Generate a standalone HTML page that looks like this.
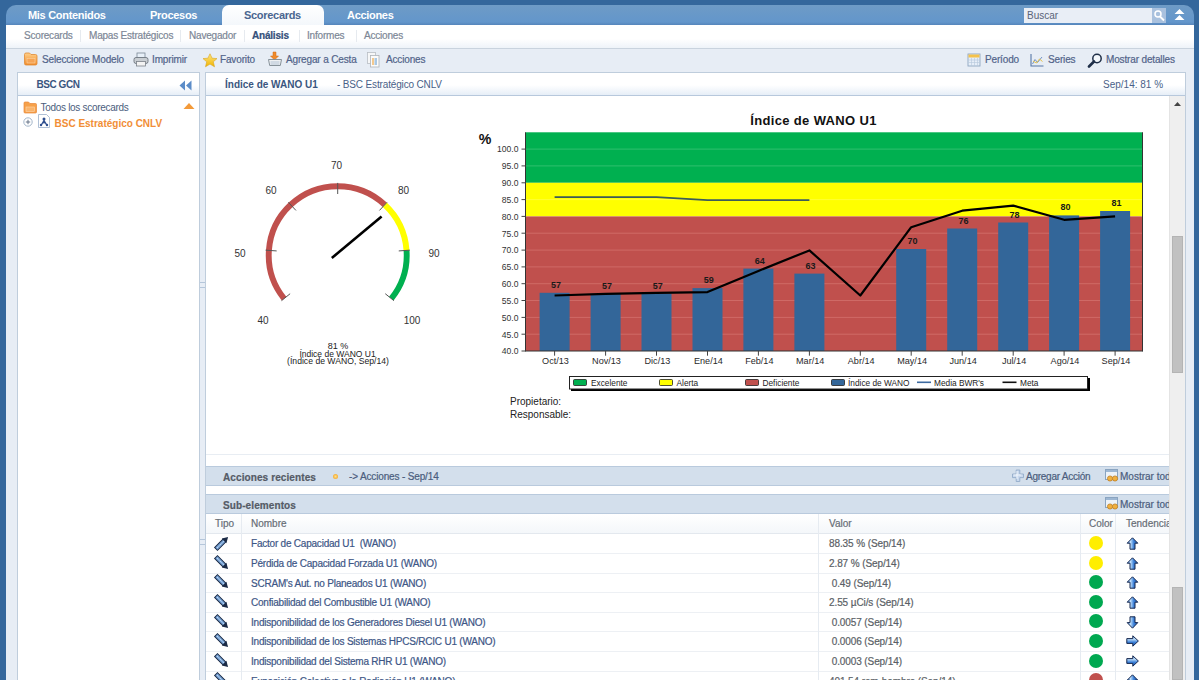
<!DOCTYPE html>
<html><head><meta charset="utf-8">
<style>
*{margin:0;padding:0;box-sizing:border-box}
html,body{width:1199px;height:680px;overflow:hidden;background:#34679c;font-family:"Liberation Sans",sans-serif}
.a{position:absolute;white-space:nowrap}
#tabbar{position:absolute;left:6px;top:5px;width:1188px;height:20px;background:linear-gradient(#6e9bc6,#6396cb 85%,#5585bb);border-radius:10px 10px 0 0}
.tab{position:absolute;top:9px;font-size:11px;font-weight:bold;color:#fff;letter-spacing:-0.3px}
.tb,.sn,.a div{-webkit-text-stroke:0.2px currentColor}
#acttab{position:absolute;left:222px;top:5px;width:102px;height:21px;background:linear-gradient(#fff,#f3f7fb);border-radius:7px 7px 0 0}
#subnav{position:absolute;left:6px;top:25px;width:1188px;height:23px;background:linear-gradient(#fff 0,#fff 60%,#eef3f9 100%)}
.sn{position:absolute;top:30px;font-size:10px;color:#7d8796;letter-spacing:-0.2px}
.sep{position:absolute;top:30px;width:1px;height:12px;background:#e6eaef}
#toolbar{position:absolute;left:6px;top:48px;width:1188px;height:632px;background:#e7edf5;border-top:1px solid #c9d3de}
.tb{position:absolute;top:54px;font-size:10px;color:#52648a;letter-spacing:-0.15px}
.panel{position:absolute;background:#fff;border:1px solid #bfcddc}
.ph{position:absolute;background:linear-gradient(#fff 0,#fff 55%,#e6eef7 100%);border-bottom:1px solid #b7c8dc}
</style></head><body>
<div id="tabbar"></div>
<div id="acttab"></div>
<div class="tab" style="left:28px">Mis Contenidos</div>
<div class="tab" style="left:150px">Procesos</div>
<div class="tab" style="left:244px;color:#4a6690">Scorecards</div>
<div class="tab" style="left:347px">Acciones</div>
<!-- search -->
<div class="a" style="left:1024px;top:8px;width:128px;height:15px;background:#e9eef6"></div>
<div class="a" style="left:1027px;top:10px;font-size:10px;color:#5a6478">Buscar</div>
<div class="a" style="left:1152px;top:8px;width:14px;height:15px;background:#a9c1de"></div>
<svg class="a" style="left:1152px;top:8px" width="14" height="15" viewBox="0 0 14 15"><circle cx="6" cy="6" r="3" fill="none" stroke="#fff" stroke-width="1.5"/><line x1="8" y1="8.5" x2="12" y2="12.5" stroke="#fff" stroke-width="1.8"/></svg>
<svg class="a" style="left:1174px;top:8px" width="11" height="13" viewBox="0 0 11 13"><path d="M5.5 1 L10.5 6 L0.5 6 Z M5.5 7 L10.5 12 L0.5 12 Z" fill="#fff"/></svg>

<div id="subnav"></div>
<div class="sn" style="left:24px">Scorecards</div>
<div class="sep" style="left:80px"></div>
<div class="sn" style="left:89px">Mapas Estratégicos</div>
<div class="sep" style="left:180px"></div>
<div class="sn" style="left:189px">Navegador</div>
<div class="sep" style="left:244px"></div>
<div class="sn" style="left:252px;font-weight:bold;color:#34507a">Análisis</div>
<div class="sep" style="left:299px"></div>
<div class="sn" style="left:307px">Informes</div>
<div class="sep" style="left:356px"></div>
<div class="sn" style="left:364px">Acciones</div>

<div id="toolbar"></div>
<div class="a" style="left:0;top:48px;width:6px;height:632px;background:#34679c"></div>
<div class="a" style="left:1194px;top:48px;width:5px;height:632px;background:#34679c"></div>

<!-- toolbar items -->
<div class="tb" style="left:42px">Seleccione Modelo</div>
<div class="tb" style="left:152px">Imprimir</div>
<div class="tb" style="left:220px">Favorito</div>
<div class="tb" style="left:286px">Agregar a Cesta</div>
<div class="tb" style="left:386px">Acciones</div>
<div class="tb" style="left:985px">Período</div>
<div class="tb" style="left:1048px">Series</div>
<div class="tb" style="left:1106px">Mostrar detalles</div>

<!-- left panel -->
<div class="panel" style="left:17px;top:72px;width:183px;height:620px"></div>
<div class="ph" style="left:18px;top:73px;width:181px;height:23px"></div>
<div class="a" style="left:36.5px;top:78.5px;font-size:10px;font-weight:bold;color:#3a5680;letter-spacing:-0.45px">BSC GCN</div>

<!-- main panel -->
<div class="panel" style="left:205px;top:72px;width:981px;height:620px"></div>
<div class="ph" style="left:206px;top:73px;width:979px;height:23px"></div>
<div class="a" style="left:225px;top:79px;font-size:10px;font-weight:bold;color:#3a5680">Índice de WANO U1</div>
<div class="a" style="left:337px;top:79px;font-size:10px;color:#4a5f88;letter-spacing:-0.15px">- BSC Estratégico CNLV</div>
<div class="a" style="left:1103px;top:79px;font-size:10px;color:#4a5f88">Sep/14: 81 %</div>


<!-- toolbar icons -->
<svg class="a" style="left:23px;top:52px" width="16" height="14" viewBox="0 0 16 14"><defs><linearGradient id="fo" x1="0" y1="0" x2="0" y2="1"><stop offset="0" stop-color="#ffd08a"/><stop offset="1" stop-color="#f08a2a"/></linearGradient></defs><path d="M1.5 2.5 Q1.5 1 3 1 L6.5 1 L8 2.5 L12.5 2.5 Q14 2.5 14 4 L14 11.5 Q14 13 12.5 13 L3 13 Q1.5 13 1.5 11.5 Z" fill="url(#fo)" stroke="#e08a35" stroke-width="0.8"/><rect x="4" y="6.5" width="8" height="4.5" fill="#f6a455" stroke="#fbd3a3" stroke-width="0.6"/></svg>
<svg class="a" style="left:133px;top:52px" width="16" height="15" viewBox="0 0 16 15"><rect x="4" y="1" width="8" height="5" fill="#e8f0f8" stroke="#7a8896" stroke-width="0.8"/><rect x="1" y="5.5" width="14" height="6" rx="2" fill="#c9ced3" stroke="#6f7780" stroke-width="0.9"/><rect x="3.5" y="9.5" width="9" height="4.5" fill="#f3f3f3" stroke="#7a8088" stroke-width="0.8"/></svg>
<svg class="a" style="left:201.5px;top:53px" width="16" height="15" viewBox="0 0 16 15"><defs><linearGradient id="st" x1="0" y1="0" x2="0" y2="1"><stop offset="0" stop-color="#ffe680"/><stop offset="1" stop-color="#f0b400"/></linearGradient></defs><path d="M8 0.8 L10.1 5.2 L15 5.6 L11.3 8.8 L12.5 13.8 L8 11.1 L3.5 13.8 L4.7 8.8 L1 5.6 L5.9 5.2 Z" fill="url(#st)" stroke="#d9a520" stroke-width="0.6"/></svg>
<svg class="a" style="left:267px;top:51px" width="16" height="16" viewBox="0 0 16 16"><path d="M6 1h3v4h2.5L7.5 9 3.5 5H6z" fill="#f08a2a" stroke="#d06a10" stroke-width="0.5"/><path d="M1.5 8.5h13l-1.2 6h-10.6z" fill="#eef0f2" stroke="#7c8790" stroke-width="0.9"/><path d="M3.5 11h9M3.5 13h9" stroke="#9ab0c8" stroke-width="0.7"/></svg>
<svg class="a" style="left:367px;top:52px" width="14" height="16" viewBox="0 0 14 16"><rect x="0.5" y="0.5" width="8" height="11" fill="#f6f7f8" stroke="#b9bec4" stroke-width="0.8"/><rect x="3.5" y="3.5" width="8.5" height="11.5" fill="#fbfbfb" stroke="#aeb4ba" stroke-width="0.8"/><rect x="5" y="6" width="2" height="7" fill="#f4c98e"/><rect x="7.5" y="6" width="2.5" height="7" fill="#a9c8e4"/></svg>
<svg class="a" style="left:967px;top:53px" width="15" height="14" viewBox="0 0 15 14"><rect x="1" y="1" width="12" height="12" fill="#e6eef8" stroke="#8ea6c2" stroke-width="0.9"/><rect x="1.5" y="1.5" width="11" height="3" fill="#f5c24a"/><path d="M1.5 7h11M1.5 9.5h11M4.5 5v8M7.5 5v8M10.5 5v8" stroke="#b6c8dc" stroke-width="0.6"/></svg>
<svg class="a" style="left:1030px;top:53px" width="15" height="14" viewBox="0 0 15 14"><path d="M1 1v12h12.5" fill="none" stroke="#5777a6" stroke-width="1.1"/><path d="M2.5 11 L5 6.5 L7.5 9.5 L12 4" fill="none" stroke="#7394c6" stroke-width="1"/><path d="M3 8 L6.5 10 L9.5 6 L12.5 8.5" fill="none" stroke="#e6c24a" stroke-width="1"/></svg>
<svg class="a" style="left:1087px;top:53px" width="16" height="15" viewBox="0 0 16 15"><circle cx="10" cy="5.5" r="4.2" fill="#f4f8fc" stroke="#1f2f48" stroke-width="1.5"/><path d="M7 8.5 L2 13.5" stroke="#1f2f48" stroke-width="2.6" stroke-linecap="round"/></svg>

<!-- left panel tree -->
<svg class="a" style="left:179px;top:79.5px" width="13" height="11" viewBox="0 0 13 11"><path d="M6 0.5 L0.5 5.5 L6 10.5 Z M12.5 0.5 L7 5.5 L12.5 10.5 Z" fill="#5b8cc8"/></svg>
<svg class="a" style="left:23px;top:101px" width="15" height="13" viewBox="0 0 15 13"><path d="M1 2 Q1 1 2 1 L5.5 1 L7 2.5 L12.5 2.5 Q13.5 2.5 13.5 3.5 L13.5 11 Q13.5 12 12.5 12 L2 12 Q1 12 1 11 Z" fill="#f6a14a" stroke="#e8873a" stroke-width="0.7"/><rect x="3" y="6" width="8.5" height="4.5" fill="#f9b46c" stroke="#fdd6ac" stroke-width="0.6"/></svg>
<div class="a" style="left:40.5px;top:101.5px;font-size:10px;color:#4b5d7d;letter-spacing:-0.3px">Todos los scorecards</div>
<svg class="a" style="left:183px;top:102px" width="12" height="8" viewBox="0 0 12 8"><path d="M6 1 L11.5 7 L0.5 7 Z" fill="#f39a3a"/></svg>
<svg class="a" style="left:23px;top:117px" width="10" height="10" viewBox="0 0 10 10"><circle cx="5" cy="5" r="4.2" fill="#fff" stroke="#8da3bd" stroke-width="0.8"/><path d="M2.8 5h4.4M5 2.8v4.4" stroke="#5a6a80" stroke-width="0.9"/></svg>
<svg class="a" style="left:38px;top:114px" width="12" height="14" viewBox="0 0 12 14"><path d="M0.5 0.5h8l3 3v10h-11z" fill="#fff" stroke="#9ab0cc" stroke-width="0.8"/><circle cx="6" cy="5" r="1.5" fill="#2f4f8f"/><path d="M3 11.5 L6 6.5 L9 11.5 M6 6.5v3" stroke="#2f4f8f" stroke-width="1.4" fill="none"/><circle cx="3" cy="11" r="1.2" fill="#2f4f8f"/><circle cx="9" cy="11" r="1.2" fill="#2f4f8f"/></svg>
<div class="a" style="left:54.5px;top:118px;font-size:10px;font-weight:bold;color:#f18e36">BSC Estratégico CNLV</div>
<!-- splitter grip -->
<div class="a" style="left:200px;top:539px;width:5px;height:6px;border-top:1px solid #b5c6da;border-bottom:1px solid #b5c6da"></div>
<div class="a" style="left:200px;top:282px;width:5px;height:6px;border-top:1px solid #b5c6da;border-bottom:1px solid #b5c6da"></div>
<svg class="a" style="left:0;top:0" width="1199" height="680" viewBox="0 0 1199 680" font-family="Liberation Sans">
<path d="M284.08 298.62 A69.0 69.0 0 0 1 384.76 204.74" fill="none" stroke="#c0504d" stroke-width="5.9"/>
<path d="M384.76 204.74 A69.0 69.0 0 0 1 406.53 250.39" fill="none" stroke="#ffff00" stroke-width="5.9"/>
<path d="M406.53 250.39 A69.0 69.0 0 0 1 391.32 298.62" fill="none" stroke="#00b050" stroke-width="5.9"/>
<line x1="290.14" y1="293.71" x2="281.51" y2="300.70" stroke="#555" stroke-width="1"/>
<line x1="276.65" y1="250.93" x2="265.58" y2="250.16" stroke="#555" stroke-width="1"/>
<line x1="295.96" y1="210.44" x2="288.39" y2="202.32" stroke="#555" stroke-width="1"/>
<line x1="337.70" y1="194.00" x2="337.70" y2="182.90" stroke="#555" stroke-width="1"/>
<line x1="379.44" y1="210.44" x2="387.01" y2="202.32" stroke="#555" stroke-width="1"/>
<line x1="398.75" y1="250.93" x2="409.82" y2="250.16" stroke="#555" stroke-width="1"/>
<line x1="385.26" y1="293.71" x2="393.89" y2="300.70" stroke="#555" stroke-width="1"/>
<line x1="331.8" y1="258" x2="381.6" y2="216.6" stroke="#000" stroke-width="2.6" stroke-linecap="butt"/>
<text x="336.5" y="168.6" font-size="10" fill="#333" text-anchor="middle">70</text>
<text x="271" y="194.4" font-size="10" fill="#333" text-anchor="middle">60</text>
<text x="403.5" y="194.4" font-size="10" fill="#333" text-anchor="middle">80</text>
<text x="240" y="256.6" font-size="10" fill="#333" text-anchor="middle">50</text>
<text x="434" y="256.6" font-size="10" fill="#333" text-anchor="middle">90</text>
<text x="263" y="324.2" font-size="10" fill="#333" text-anchor="middle">40</text>
<text x="412" y="324.2" font-size="10" fill="#333" text-anchor="middle">100</text>
<text x="338" y="349" font-size="9" fill="#222" text-anchor="middle">81 %</text>
<text x="337.5" y="356.5" font-size="8.5" fill="#222" text-anchor="middle">Índice de WANO U1</text>
<text x="338" y="364" font-size="8.65" fill="#222" text-anchor="middle">(Índice de WANO, Sep/14)</text>
<text x="510" y="405" font-size="10" fill="#222">Propietario:</text>
<text x="510" y="417.5" font-size="10" fill="#222">Responsable:</text>
</svg>
<svg class="a" style="left:0;top:0" width="1199" height="680" viewBox="0 0 1199 680" font-family="Liberation Sans">
<rect x="525.5" y="132.3" width="617.0" height="50.5" fill="#00b050"/>
<rect x="525.5" y="182.8" width="617.0" height="33.6" fill="#ffff00"/>
<rect x="525.5" y="216.4" width="617.0" height="134.6" fill="#c0504d"/>
<line x1="525.5" y1="334.2" x2="1142.5" y2="334.2" stroke="#cf6a66" stroke-width="1"/>
<line x1="525.5" y1="317.4" x2="1142.5" y2="317.4" stroke="#cf6a66" stroke-width="1"/>
<line x1="525.5" y1="300.5" x2="1142.5" y2="300.5" stroke="#cf6a66" stroke-width="1"/>
<line x1="525.5" y1="283.7" x2="1142.5" y2="283.7" stroke="#cf6a66" stroke-width="1"/>
<line x1="525.5" y1="266.9" x2="1142.5" y2="266.9" stroke="#cf6a66" stroke-width="1"/>
<line x1="525.5" y1="250.1" x2="1142.5" y2="250.1" stroke="#cf6a66" stroke-width="1"/>
<line x1="525.5" y1="233.2" x2="1142.5" y2="233.2" stroke="#cf6a66" stroke-width="1"/>
<line x1="525.5" y1="199.6" x2="1142.5" y2="199.6" stroke="#ffff33" stroke-width="1"/>
<line x1="525.5" y1="165.9" x2="1142.5" y2="165.9" stroke="#2fbf6f" stroke-width="1"/>
<line x1="525.5" y1="149.1" x2="1142.5" y2="149.1" stroke="#2fbf6f" stroke-width="1"/>
<rect x="539.6" y="292.8" width="30" height="58.2" fill="#336699"/>
<rect x="590.6" y="293.8" width="30" height="57.2" fill="#336699"/>
<rect x="641.5" y="293.5" width="30" height="57.5" fill="#336699"/>
<rect x="692.5" y="288.1" width="30" height="62.9" fill="#336699"/>
<rect x="743.4" y="268.6" width="30" height="82.4" fill="#336699"/>
<rect x="794.4" y="273.6" width="30" height="77.4" fill="#336699"/>
<rect x="896.2" y="249.0" width="30" height="102.0" fill="#336699"/>
<rect x="947.2" y="228.5" width="30" height="122.5" fill="#336699"/>
<rect x="998.2" y="222.5" width="30" height="128.5" fill="#336699"/>
<rect x="1049.1" y="215.4" width="30" height="135.6" fill="#336699"/>
<rect x="1100.1" y="211.0" width="30" height="140.0" fill="#336699"/>
<polyline points="554.6,197.2 605.6,197.2 656.5,197.2 707.5,200.2 758.4,200.2 809.4,200.2" fill="none" stroke="#3d5c58" stroke-width="1.7"/>
<polyline points="554.6,295.5 605.6,293.8 656.5,292.8 707.5,292.1 758.4,270.9 809.4,250.4 860.3,295.5 911.2,227.2 962.2,210.7 1013.2,205.6 1064.1,219.8 1115.1,216.4" fill="none" stroke="#000" stroke-width="2.2" stroke-linejoin="round"/>
<text x="555.9" y="287.8" font-size="9" font-weight="bold" fill="#1a1a1a" text-anchor="middle">57</text>
<text x="606.9" y="288.8" font-size="9" font-weight="bold" fill="#1a1a1a" text-anchor="middle">57</text>
<text x="657.8" y="288.5" font-size="9" font-weight="bold" fill="#1a1a1a" text-anchor="middle">57</text>
<text x="708.8" y="283.1" font-size="9" font-weight="bold" fill="#1a1a1a" text-anchor="middle">59</text>
<text x="759.7" y="263.6" font-size="9" font-weight="bold" fill="#1a1a1a" text-anchor="middle">64</text>
<text x="810.6" y="268.6" font-size="9" font-weight="bold" fill="#1a1a1a" text-anchor="middle">63</text>
<text x="912.5" y="244.0" font-size="9" font-weight="bold" fill="#1a1a1a" text-anchor="middle">70</text>
<text x="963.5" y="223.5" font-size="9" font-weight="bold" fill="#1a1a1a" text-anchor="middle">76</text>
<text x="1014.5" y="217.5" font-size="9" font-weight="bold" fill="#1a1a1a" text-anchor="middle">78</text>
<text x="1065.4" y="210.4" font-size="9" font-weight="bold" fill="#1a1a1a" text-anchor="middle">80</text>
<text x="1116.4" y="206.0" font-size="9" font-weight="bold" fill="#1a1a1a" text-anchor="middle">81</text>
<line x1="525.5" y1="132.3" x2="525.5" y2="351.5" stroke="#333" stroke-width="1"/>
<line x1="1142.5" y1="132.3" x2="1142.5" y2="351.5" stroke="#333" stroke-width="1"/>
<line x1="525.5" y1="351.0" x2="1142.5" y2="351.0" stroke="#333" stroke-width="1"/>
<line x1="521.5" y1="351.0" x2="525.5" y2="351.0" stroke="#444" stroke-width="1"/>
<text x="518.5" y="354.3" font-size="8.6" fill="#333" text-anchor="end">40.0</text>
<line x1="521.5" y1="334.2" x2="525.5" y2="334.2" stroke="#444" stroke-width="1"/>
<text x="518.5" y="337.5" font-size="8.6" fill="#333" text-anchor="end">45.0</text>
<line x1="521.5" y1="317.4" x2="525.5" y2="317.4" stroke="#444" stroke-width="1"/>
<text x="518.5" y="320.7" font-size="8.6" fill="#333" text-anchor="end">50.0</text>
<line x1="521.5" y1="300.5" x2="525.5" y2="300.5" stroke="#444" stroke-width="1"/>
<text x="518.5" y="303.8" font-size="8.6" fill="#333" text-anchor="end">55.0</text>
<line x1="521.5" y1="283.7" x2="525.5" y2="283.7" stroke="#444" stroke-width="1"/>
<text x="518.5" y="287.0" font-size="8.6" fill="#333" text-anchor="end">60.0</text>
<line x1="521.5" y1="266.9" x2="525.5" y2="266.9" stroke="#444" stroke-width="1"/>
<text x="518.5" y="270.2" font-size="8.6" fill="#333" text-anchor="end">65.0</text>
<line x1="521.5" y1="250.1" x2="525.5" y2="250.1" stroke="#444" stroke-width="1"/>
<text x="518.5" y="253.4" font-size="8.6" fill="#333" text-anchor="end">70.0</text>
<line x1="521.5" y1="233.2" x2="525.5" y2="233.2" stroke="#444" stroke-width="1"/>
<text x="518.5" y="236.5" font-size="8.6" fill="#333" text-anchor="end">75.0</text>
<line x1="521.5" y1="216.4" x2="525.5" y2="216.4" stroke="#444" stroke-width="1"/>
<text x="518.5" y="219.7" font-size="8.6" fill="#333" text-anchor="end">80.0</text>
<line x1="521.5" y1="199.6" x2="525.5" y2="199.6" stroke="#444" stroke-width="1"/>
<text x="518.5" y="202.9" font-size="8.6" fill="#333" text-anchor="end">85.0</text>
<line x1="521.5" y1="182.8" x2="525.5" y2="182.8" stroke="#444" stroke-width="1"/>
<text x="518.5" y="186.1" font-size="8.6" fill="#333" text-anchor="end">90.0</text>
<line x1="521.5" y1="165.9" x2="525.5" y2="165.9" stroke="#444" stroke-width="1"/>
<text x="518.5" y="169.2" font-size="8.6" fill="#333" text-anchor="end">95.0</text>
<line x1="521.5" y1="149.1" x2="525.5" y2="149.1" stroke="#444" stroke-width="1"/>
<text x="518.5" y="152.4" font-size="8.6" fill="#333" text-anchor="end">100.0</text>
<line x1="554.6" y1="351.0" x2="554.6" y2="355.7" stroke="#444" stroke-width="1"/>
<text x="555.5" y="364.4" font-size="9.1" fill="#2a2a2a" text-anchor="middle">Oct/13</text>
<line x1="605.6" y1="351.0" x2="605.6" y2="355.7" stroke="#444" stroke-width="1"/>
<text x="606.5" y="364.4" font-size="9.1" fill="#2a2a2a" text-anchor="middle">Nov/13</text>
<line x1="656.5" y1="351.0" x2="656.5" y2="355.7" stroke="#444" stroke-width="1"/>
<text x="657.4" y="364.4" font-size="9.1" fill="#2a2a2a" text-anchor="middle">Dic/13</text>
<line x1="707.5" y1="351.0" x2="707.5" y2="355.7" stroke="#444" stroke-width="1"/>
<text x="708.4" y="364.4" font-size="9.1" fill="#2a2a2a" text-anchor="middle">Ene/14</text>
<line x1="758.4" y1="351.0" x2="758.4" y2="355.7" stroke="#444" stroke-width="1"/>
<text x="759.3" y="364.4" font-size="9.1" fill="#2a2a2a" text-anchor="middle">Feb/14</text>
<line x1="809.4" y1="351.0" x2="809.4" y2="355.7" stroke="#444" stroke-width="1"/>
<text x="810.2" y="364.4" font-size="9.1" fill="#2a2a2a" text-anchor="middle">Mar/14</text>
<line x1="860.3" y1="351.0" x2="860.3" y2="355.7" stroke="#444" stroke-width="1"/>
<text x="861.2" y="364.4" font-size="9.1" fill="#2a2a2a" text-anchor="middle">Abr/14</text>
<line x1="911.2" y1="351.0" x2="911.2" y2="355.7" stroke="#444" stroke-width="1"/>
<text x="912.1" y="364.4" font-size="9.1" fill="#2a2a2a" text-anchor="middle">May/14</text>
<line x1="962.2" y1="351.0" x2="962.2" y2="355.7" stroke="#444" stroke-width="1"/>
<text x="963.1" y="364.4" font-size="9.1" fill="#2a2a2a" text-anchor="middle">Jun/14</text>
<line x1="1013.2" y1="351.0" x2="1013.2" y2="355.7" stroke="#444" stroke-width="1"/>
<text x="1014.1" y="364.4" font-size="9.1" fill="#2a2a2a" text-anchor="middle">Jul/14</text>
<line x1="1064.1" y1="351.0" x2="1064.1" y2="355.7" stroke="#444" stroke-width="1"/>
<text x="1065.0" y="364.4" font-size="9.1" fill="#2a2a2a" text-anchor="middle">Ago/14</text>
<line x1="1115.1" y1="351.0" x2="1115.1" y2="355.7" stroke="#444" stroke-width="1"/>
<text x="1116.0" y="364.4" font-size="9.1" fill="#2a2a2a" text-anchor="middle">Sep/14</text>
<text x="478.8" y="144.2" font-size="14.2" font-weight="bold" fill="#111">%</text>
<text x="813.5" y="125" font-size="13" font-weight="bold" fill="#111" text-anchor="middle" letter-spacing="0.35">Índice de WANO U1</text>
<rect x="571" y="378" width="519" height="13" fill="#000"/>
<rect x="569.5" y="376.5" width="518" height="12.5" fill="#fff" stroke="#222" stroke-width="1"/>
<rect x="573.5" y="379.5" width="13" height="6" fill="#00b050" stroke="#222" stroke-width="0.8" rx="1"/>
<text x="591" y="386" font-size="8.3" fill="#222">Excelente</text>
<rect x="659.5" y="379.5" width="13" height="6" fill="#ffff00" stroke="#222" stroke-width="0.8" rx="1"/>
<text x="676.5" y="386" font-size="8.3" fill="#222">Alerta</text>
<rect x="745.5" y="379.5" width="13" height="6" fill="#c0504d" stroke="#222" stroke-width="0.8" rx="1"/>
<text x="762.5" y="386" font-size="8.3" fill="#222">Deficiente</text>
<rect x="831.5" y="379.5" width="13" height="6" fill="#336699" stroke="#222" stroke-width="0.8" rx="1"/>
<text x="848" y="386" font-size="8.3" fill="#222">Índice de WANO</text>
<line x1="917" y1="382.3" x2="931" y2="382.3" stroke="#3d6aa0" stroke-width="1.6"/>
<text x="934" y="386" font-size="8.3" fill="#222">Media BWR's</text>
<line x1="1002.5" y1="382.3" x2="1016.5" y2="382.3" stroke="#111" stroke-width="1.6"/>
<text x="1020" y="386" font-size="8.3" fill="#222">Meta</text>
</svg>
<div class="a" style="left:206px;top:454px;width:963px;height:1px;background:#e8edf3"></div>
<div class="a" style="left:1169px;top:96px;width:16px;height:584px;background:#efefef;border-left:1px solid #e4e4e4"></div>
<svg class="a" style="left:1172px;top:99px" width="11" height="9"><path d="M2 7 L5.5 3 L9 7 Z" fill="#444"/></svg>
<div class="a" style="left:1172px;top:236px;width:11px;height:137px;background:#c1c1c1;border:1px solid #b4b4b4"></div>
<div class="a" style="left:1172px;top:587px;width:11px;height:93px;background:#c1c1c1;border:1px solid #b4b4b4"></div>
<div class="a" style="left:0;top:0;width:1169px;height:680px;overflow:hidden">
<div class="a" style="left:206px;top:466px;width:963px;height:20px;background:#d3dfec;border-top:1px solid #b9cadd;border-bottom:1px solid #b9cadd"></div>
<div class="a" style="left:223px;top:471.6px;font-size:10px;font-weight:bold;color:#555b66;letter-spacing:0.1px">Acciones recientes</div>
<div class="a" style="left:206px;top:494px;width:963px;height:20px;background:#d3dfec;border-top:1px solid #b9cadd;border-bottom:1px solid #b9cadd"></div>
<div class="a" style="left:223px;top:499.6px;font-size:10px;font-weight:bold;color:#555b66;letter-spacing:0.1px">Sub-elementos</div>
<div class="a" style="left:333px;top:473.5px;width:5px;height:5px;border-radius:50%;background:radial-gradient(#ffe08a 0,#f5b440 60%,#f2a030 100%)"></div>
<div class="a" style="left:349px;top:471px;font-size:10px;color:#4b5d7d;letter-spacing:-0.15px">-&gt; Acciones - Sep/14</div>
<svg class="a" style="left:1012px;top:469px" width="12" height="13"><path d="M4.2 1h3.6v4h3.7v3.6H7.8v3.9H4.2V8.6H0.5V5h3.7z" fill="#c9d9ee" stroke="#93abc9" stroke-width="0.9"/><path d="M5 2v8M1.5 6h8" stroke="#f4f8fd" stroke-width="0.9"/></svg>
<div class="a" style="left:1026px;top:471px;font-size:10px;color:#4b5d7d;letter-spacing:-0.25px">Agregar Acción</div>
<svg class="a" style="left:1105px;top:469px" width="15" height="13"><rect x="0.5" y="0.5" width="12" height="10" fill="#eef3f8" stroke="#8aa4c0"/><rect x="1" y="1" width="11" height="2" fill="#9db7d3"/><circle cx="5" cy="9.5" r="2.6" fill="#f0b040" stroke="#b87a20" stroke-width="0.7"/><circle cx="10" cy="9.5" r="2.6" fill="#f0b040" stroke="#b87a20" stroke-width="0.7"/></svg>
<div class="a" style="left:1120px;top:471px;width:49px;overflow:hidden;font-size:10px;color:#4b5d7d">Mostrar todo</div>
<svg class="a" style="left:1105px;top:497px" width="15" height="13"><rect x="0.5" y="0.5" width="12" height="10" fill="#eef3f8" stroke="#8aa4c0"/><rect x="1" y="1" width="11" height="2" fill="#9db7d3"/><circle cx="5" cy="9.5" r="2.6" fill="#f0b040" stroke="#b87a20" stroke-width="0.7"/><circle cx="10" cy="9.5" r="2.6" fill="#f0b040" stroke="#b87a20" stroke-width="0.7"/></svg>
<div class="a" style="left:1120px;top:499px;width:49px;overflow:hidden;font-size:10px;color:#4b5d7d">Mostrar todo</div>
<div class="a" style="left:206px;top:514px;width:963px;height:20px;background:linear-gradient(#fff,#f4f7fa);border-bottom:1px solid #e3e8ee"></div>
<div class="a" style="left:215px;top:518px;font-size:10px;color:#676d76">Tipo</div>
<div class="a" style="left:251px;top:518px;font-size:10px;color:#676d76">Nombre</div>
<div class="a" style="left:829px;top:518px;font-size:10px;color:#676d76">Valor</div>
<div class="a" style="left:1089px;top:518px;font-size:10px;color:#676d76">Color</div>
<div class="a" style="left:1126px;top:518px;font-size:10px;color:#676d76">Tendencia</div>
<div class="a" style="left:206px;top:552.9px;width:963px;height:1px;background:#edf0f4"></div>
<svg class="a" style="left:211.8px;top:532.8px" width="20" height="20" viewBox="0 0 20 20"><g transform="rotate(-45 10 10)"><rect x="1.6" y="8" width="12" height="4" fill="#77a3d6" stroke="#1b2a45" stroke-width="1"/><path d="M3 10h9.5" stroke="#cfe2f6" stroke-width="0.9" stroke-dasharray="1.2 0.9"/><path d="M13 6.8 L18.6 10 L13 13.2 Z" fill="#1b2a45"/></g></svg>
<div class="a" style="left:251px;top:538.4px;font-size:10px;color:#3d5686;letter-spacing:-0.22px">Factor de Capacidad U1&nbsp; (WANO)</div>
<div class="a" style="left:829px;top:538.4px;font-size:10px;color:#5b5f66;letter-spacing:-0.1px">88.35 % (Sep/14)</div>
<div class="a" style="left:1089px;top:536.0px;width:14px;height:14px;border-radius:50%;background:#ffee00"></div>
<svg class="a" style="left:1126px;top:537.2px" width="14" height="14" viewBox="0 0 14 14"><defs><linearGradient id="g0" x1="0" y1="0" x2="1" y2="0"><stop offset="0" stop-color="#3f86dc"/><stop offset="0.3" stop-color="#c6e3fc"/><stop offset="0.62" stop-color="#3b80d8"/><stop offset="1" stop-color="#1c56b0"/></linearGradient></defs><path d="M6.5 0.8 L11.8 6.2 L9 6.2 L9 12.2 L4 12.2 L4 6.2 L1.2 6.2 Z" fill="url(#g0)" stroke="#17284f" stroke-width="1" stroke-linejoin="miter"/></svg>
<div class="a" style="left:206px;top:572.5px;width:963px;height:1px;background:#edf0f4"></div>
<svg class="a" style="left:211.8px;top:552.8px" width="20" height="20" viewBox="0 0 20 20"><g transform="rotate(45 10 10)"><rect x="1.6" y="8" width="12" height="4" fill="#77a3d6" stroke="#1b2a45" stroke-width="1"/><path d="M3 10h9.5" stroke="#cfe2f6" stroke-width="0.9" stroke-dasharray="1.2 0.9"/><path d="M13 6.8 L18.6 10 L13 13.2 Z" fill="#1b2a45"/></g></svg>
<div class="a" style="left:251px;top:558.0px;font-size:10px;color:#3d5686;letter-spacing:-0.22px">Pérdida de Capacidad Forzada U1 (WANO)</div>
<div class="a" style="left:829px;top:558.0px;font-size:10px;color:#5b5f66;letter-spacing:-0.1px">2.87 % (Sep/14)</div>
<div class="a" style="left:1089px;top:555.6px;width:14px;height:14px;border-radius:50%;background:#ffee00"></div>
<svg class="a" style="left:1126px;top:556.8px" width="14" height="14" viewBox="0 0 14 14"><defs><linearGradient id="g1" x1="0" y1="0" x2="1" y2="0"><stop offset="0" stop-color="#3f86dc"/><stop offset="0.3" stop-color="#c6e3fc"/><stop offset="0.62" stop-color="#3b80d8"/><stop offset="1" stop-color="#1c56b0"/></linearGradient></defs><path d="M6.5 0.8 L11.8 6.2 L9 6.2 L9 12.2 L4 12.2 L4 6.2 L1.2 6.2 Z" fill="url(#g1)" stroke="#17284f" stroke-width="1" stroke-linejoin="miter"/></svg>
<div class="a" style="left:206px;top:592.1px;width:963px;height:1px;background:#edf0f4"></div>
<svg class="a" style="left:211.8px;top:572.4px" width="20" height="20" viewBox="0 0 20 20"><g transform="rotate(45 10 10)"><rect x="1.6" y="8" width="12" height="4" fill="#77a3d6" stroke="#1b2a45" stroke-width="1"/><path d="M3 10h9.5" stroke="#cfe2f6" stroke-width="0.9" stroke-dasharray="1.2 0.9"/><path d="M13 6.8 L18.6 10 L13 13.2 Z" fill="#1b2a45"/></g></svg>
<div class="a" style="left:251px;top:577.6px;font-size:10px;color:#3d5686;letter-spacing:-0.22px">SCRAM's Aut. no Planeados U1 (WANO)</div>
<div class="a" style="left:829px;top:577.6px;font-size:10px;color:#5b5f66;letter-spacing:-0.1px">&nbsp;0.49 (Sep/14)</div>
<div class="a" style="left:1089px;top:575.2px;width:14px;height:14px;border-radius:50%;background:#00a850"></div>
<svg class="a" style="left:1126px;top:576.4px" width="14" height="14" viewBox="0 0 14 14"><defs><linearGradient id="g2" x1="0" y1="0" x2="1" y2="0"><stop offset="0" stop-color="#3f86dc"/><stop offset="0.3" stop-color="#c6e3fc"/><stop offset="0.62" stop-color="#3b80d8"/><stop offset="1" stop-color="#1c56b0"/></linearGradient></defs><path d="M6.5 0.8 L11.8 6.2 L9 6.2 L9 12.2 L4 12.2 L4 6.2 L1.2 6.2 Z" fill="url(#g2)" stroke="#17284f" stroke-width="1" stroke-linejoin="miter"/></svg>
<div class="a" style="left:206px;top:611.7px;width:963px;height:1px;background:#edf0f4"></div>
<svg class="a" style="left:211.8px;top:592.0px" width="20" height="20" viewBox="0 0 20 20"><g transform="rotate(45 10 10)"><rect x="1.6" y="8" width="12" height="4" fill="#77a3d6" stroke="#1b2a45" stroke-width="1"/><path d="M3 10h9.5" stroke="#cfe2f6" stroke-width="0.9" stroke-dasharray="1.2 0.9"/><path d="M13 6.8 L18.6 10 L13 13.2 Z" fill="#1b2a45"/></g></svg>
<div class="a" style="left:251px;top:597.2px;font-size:10px;color:#3d5686;letter-spacing:-0.22px">Confiabilidad del Combustible U1 (WANO)</div>
<div class="a" style="left:829px;top:597.2px;font-size:10px;color:#5b5f66;letter-spacing:-0.1px">2.55 µCi/s (Sep/14)</div>
<div class="a" style="left:1089px;top:594.8px;width:14px;height:14px;border-radius:50%;background:#00a850"></div>
<svg class="a" style="left:1126px;top:596.0px" width="14" height="14" viewBox="0 0 14 14"><defs><linearGradient id="g3" x1="0" y1="0" x2="1" y2="0"><stop offset="0" stop-color="#3f86dc"/><stop offset="0.3" stop-color="#c6e3fc"/><stop offset="0.62" stop-color="#3b80d8"/><stop offset="1" stop-color="#1c56b0"/></linearGradient></defs><path d="M6.5 0.8 L11.8 6.2 L9 6.2 L9 12.2 L4 12.2 L4 6.2 L1.2 6.2 Z" fill="url(#g3)" stroke="#17284f" stroke-width="1" stroke-linejoin="miter"/></svg>
<div class="a" style="left:206px;top:631.3px;width:963px;height:1px;background:#edf0f4"></div>
<svg class="a" style="left:211.8px;top:611.6px" width="20" height="20" viewBox="0 0 20 20"><g transform="rotate(45 10 10)"><rect x="1.6" y="8" width="12" height="4" fill="#77a3d6" stroke="#1b2a45" stroke-width="1"/><path d="M3 10h9.5" stroke="#cfe2f6" stroke-width="0.9" stroke-dasharray="1.2 0.9"/><path d="M13 6.8 L18.6 10 L13 13.2 Z" fill="#1b2a45"/></g></svg>
<div class="a" style="left:251px;top:616.8px;font-size:10px;color:#3d5686;letter-spacing:-0.22px">Indisponibilidad de los Generadores Diesel U1 (WANO)</div>
<div class="a" style="left:829px;top:616.8px;font-size:10px;color:#5b5f66;letter-spacing:-0.1px">&nbsp;0.0057 (Sep/14)</div>
<div class="a" style="left:1089px;top:614.4px;width:14px;height:14px;border-radius:50%;background:#00a850"></div>
<svg class="a" style="left:1126px;top:615.6px" width="14" height="14" viewBox="0 0 14 14"><defs><linearGradient id="g4" x1="0" y1="0" x2="1" y2="0"><stop offset="0" stop-color="#3f86dc"/><stop offset="0.3" stop-color="#c6e3fc"/><stop offset="0.62" stop-color="#3b80d8"/><stop offset="1" stop-color="#1c56b0"/></linearGradient></defs><path d="M4 0.8 L9 0.8 L9 6.6 L11.8 6.6 L6.5 12.2 L1.2 6.6 L4 6.6 Z" fill="url(#g4)" stroke="#17284f" stroke-width="1" stroke-linejoin="miter"/></svg>
<div class="a" style="left:206px;top:650.9px;width:963px;height:1px;background:#edf0f4"></div>
<svg class="a" style="left:211.8px;top:631.2px" width="20" height="20" viewBox="0 0 20 20"><g transform="rotate(45 10 10)"><rect x="1.6" y="8" width="12" height="4" fill="#77a3d6" stroke="#1b2a45" stroke-width="1"/><path d="M3 10h9.5" stroke="#cfe2f6" stroke-width="0.9" stroke-dasharray="1.2 0.9"/><path d="M13 6.8 L18.6 10 L13 13.2 Z" fill="#1b2a45"/></g></svg>
<div class="a" style="left:251px;top:636.4px;font-size:10px;color:#3d5686;letter-spacing:-0.22px">Indisponibilidad de los Sistemas HPCS/RCIC U1 (WANO)</div>
<div class="a" style="left:829px;top:636.4px;font-size:10px;color:#5b5f66;letter-spacing:-0.1px">&nbsp;0.0006 (Sep/14)</div>
<div class="a" style="left:1089px;top:634.0px;width:14px;height:14px;border-radius:50%;background:#00a850"></div>
<svg class="a" style="left:1126px;top:635.2px" width="14" height="14" viewBox="0 0 14 14"><defs><linearGradient id="g5" x1="0" y1="0" x2="0" y2="1"><stop offset="0" stop-color="#3f86dc"/><stop offset="0.3" stop-color="#c6e3fc"/><stop offset="0.62" stop-color="#3b80d8"/><stop offset="1" stop-color="#1c56b0"/></linearGradient></defs><path d="M0.8 3.6 L6.8 3.6 L6.8 0.8 L12.4 6 L6.8 11.2 L6.8 8.4 L0.8 8.4 Z" fill="url(#g5)" stroke="#17284f" stroke-width="1" stroke-linejoin="miter"/></svg>
<div class="a" style="left:206px;top:670.5px;width:963px;height:1px;background:#edf0f4"></div>
<svg class="a" style="left:211.8px;top:650.8px" width="20" height="20" viewBox="0 0 20 20"><g transform="rotate(45 10 10)"><rect x="1.6" y="8" width="12" height="4" fill="#77a3d6" stroke="#1b2a45" stroke-width="1"/><path d="M3 10h9.5" stroke="#cfe2f6" stroke-width="0.9" stroke-dasharray="1.2 0.9"/><path d="M13 6.8 L18.6 10 L13 13.2 Z" fill="#1b2a45"/></g></svg>
<div class="a" style="left:251px;top:656.0px;font-size:10px;color:#3d5686;letter-spacing:-0.22px">Indisponibilidad del Sistema RHR U1 (WANO)</div>
<div class="a" style="left:829px;top:656.0px;font-size:10px;color:#5b5f66;letter-spacing:-0.1px">&nbsp;0.0003 (Sep/14)</div>
<div class="a" style="left:1089px;top:653.6px;width:14px;height:14px;border-radius:50%;background:#00a850"></div>
<svg class="a" style="left:1126px;top:654.8px" width="14" height="14" viewBox="0 0 14 14"><defs><linearGradient id="g6" x1="0" y1="0" x2="0" y2="1"><stop offset="0" stop-color="#3f86dc"/><stop offset="0.3" stop-color="#c6e3fc"/><stop offset="0.62" stop-color="#3b80d8"/><stop offset="1" stop-color="#1c56b0"/></linearGradient></defs><path d="M0.8 3.6 L6.8 3.6 L6.8 0.8 L12.4 6 L6.8 11.2 L6.8 8.4 L0.8 8.4 Z" fill="url(#g6)" stroke="#17284f" stroke-width="1" stroke-linejoin="miter"/></svg>
<div class="a" style="left:206px;top:690.1px;width:963px;height:1px;background:#edf0f4"></div>
<svg class="a" style="left:211.8px;top:670.4px" width="20" height="20" viewBox="0 0 20 20"><g transform="rotate(45 10 10)"><rect x="1.6" y="8" width="12" height="4" fill="#77a3d6" stroke="#1b2a45" stroke-width="1"/><path d="M3 10h9.5" stroke="#cfe2f6" stroke-width="0.9" stroke-dasharray="1.2 0.9"/><path d="M13 6.8 L18.6 10 L13 13.2 Z" fill="#1b2a45"/></g></svg>
<div class="a" style="left:251px;top:675.6px;font-size:10px;color:#3d5686;letter-spacing:-0.22px">Exposición Colectiva a la Radiación U1 (WANO)</div>
<div class="a" style="left:829px;top:675.6px;font-size:10px;color:#5b5f66;letter-spacing:-0.1px">401.54 rem-hombre (Sep/14)</div>
<div class="a" style="left:1089px;top:673.2px;width:14px;height:14px;border-radius:50%;background:#c0504d"></div>
<svg class="a" style="left:1126px;top:674.4px" width="14" height="14" viewBox="0 0 14 14"><defs><linearGradient id="g7" x1="0" y1="0" x2="1" y2="0"><stop offset="0" stop-color="#3f86dc"/><stop offset="0.3" stop-color="#c6e3fc"/><stop offset="0.62" stop-color="#3b80d8"/><stop offset="1" stop-color="#1c56b0"/></linearGradient></defs><path d="M6.5 0.8 L11.8 6.2 L9 6.2 L9 12.2 L4 12.2 L4 6.2 L1.2 6.2 Z" fill="url(#g7)" stroke="#17284f" stroke-width="1" stroke-linejoin="miter"/></svg>
<div class="a" style="left:241px;top:514px;width:1px;height:166px;background:#e6ebf1"></div>
<div class="a" style="left:818px;top:514px;width:1px;height:166px;background:#e6ebf1"></div>
<div class="a" style="left:1080px;top:514px;width:1px;height:166px;background:#e6ebf1"></div>
<div class="a" style="left:1115px;top:514px;width:1px;height:166px;background:#e6ebf1"></div>
</div>
</body></html>
